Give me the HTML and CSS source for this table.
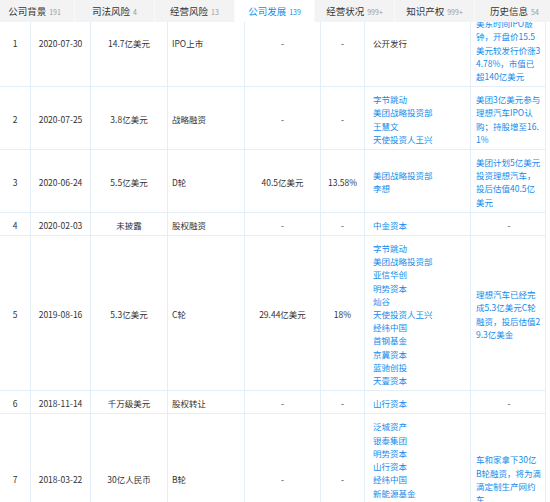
FILE: index.html
```html
<!DOCTYPE html>
<html lang="zh-CN">
<head>
<meta charset="utf-8">
<title>公司发展 - 融资历程</title>
<link rel="stylesheet" href="styles.css">
</head>
<body>
<div class="page">
  <nav class="tabs">
    <a class="tab">公司背景<span class="cnt">191</span></a>
    <a class="tab">司法风险<span class="cnt">4</span></a>
    <a class="tab">经营风险<span class="cnt">13</span></a>
    <a class="tab active">公司发展<span class="cnt">139</span></a>
    <a class="tab">经营状况<span class="cnt">999+</span></a>
    <a class="tab">知识产权<span class="cnt">999+</span></a>
    <a class="tab">历史信息<span class="cnt">54</span></a>
  </nav>
  <div class="scroll">
    <table class="grid">
      <colgroup>
        <col class="c1"><col class="c2"><col class="c3"><col class="c4">
        <col class="c5"><col class="c6"><col class="c7"><col class="c8">
      </colgroup>
      <tbody>
        <tr>
          <td class="ctr">1</td><td class="ctr">2020-07-30</td><td class="ctr">14.7亿美元</td><td class="round">IPO上市</td>
          <td class="ctr">-</td><td class="ctr">-</td>
          <td class="inv">公开发行</td>
          <td class="desc"><span class="news">理想汽车登陆纳斯达<br>美东时间IPO敲<br>钟，开盘价15.5<br>美元较发行价涨3<br>4.78%，市值已<br>超140亿美元</span></td>
        </tr>
        <tr>
          <td class="ctr">2</td><td class="ctr">2020-07-25</td><td class="ctr">3.8亿美元</td><td class="round">战略融资</td>
          <td class="ctr">-</td><td class="ctr">-</td>
          <td class="inv"><a>字节跳动</a><a>美团战略投资部</a><a>王慧文</a><a>天使投资人王兴</a></td>
          <td class="desc"><span class="news">美团3亿美元参与<br>理想汽车IPO认<br>购；持股增至16.<br>1%</span></td>
        </tr>
        <tr>
          <td class="ctr">3</td><td class="ctr">2020-06-24</td><td class="ctr">5.5亿美元</td><td class="round">D轮</td>
          <td class="ctr">40.5亿美元</td><td class="ctr">13.58%</td>
          <td class="inv"><a>美团战略投资部</a><a>李想</a></td>
          <td class="desc"><span class="news">美团计划5亿美元<br>投资理想汽车，<br>投后估值40.5亿<br>美元</span></td>
        </tr>
        <tr>
          <td class="ctr">4</td><td class="ctr">2020-02-03</td><td class="ctr">未披露</td><td class="round">股权融资</td>
          <td class="ctr">-</td><td class="ctr">-</td>
          <td class="inv"><a>中金资本</a></td>
          <td class="desc ctr">-</td>
        </tr>
        <tr>
          <td class="ctr">5</td><td class="ctr">2019-08-16</td><td class="ctr">5.3亿美元</td><td class="round">C轮</td>
          <td class="ctr">29.44亿美元</td><td class="ctr">18%</td>
          <td class="inv"><a>字节跳动</a><a>美团战略投资部</a><a>亚信华创</a><a>明势资本</a><a>灿谷</a><a>天使投资人王兴</a><a>经纬中国</a><a>首钢基金</a><a>京冀资本</a><a>蓝驰创投</a><a>天壹资本</a></td>
          <td class="desc"><span class="news">理想汽车已经完<br>成5.3亿美元C轮<br>融资，投后估值2<br>9.3亿美金</span></td>
        </tr>
        <tr>
          <td class="ctr">6</td><td class="ctr">2018-11-14</td><td class="ctr">千万级美元</td><td class="round">股权转让</td>
          <td class="ctr">-</td><td class="ctr">-</td>
          <td class="inv"><a>山行资本</a></td>
          <td class="desc ctr">-</td>
        </tr>
        <tr>
          <td class="ctr">7</td><td class="ctr">2018-03-22</td><td class="ctr">30亿人民币</td><td class="round">B轮</td>
          <td class="ctr">-</td><td class="ctr">-</td>
          <td class="inv"><a>泛城资产</a><a>银泰集团</a><a>明势资本</a><a>山行资本</a><a>经纬中国</a><a>新能源基金</a><a>源码资本</a><a>首钢基金</a><a>蓝驰创投</a></td>
          <td class="desc"><span class="news">车和家拿下30亿<br>B轮融资，将为滴<br>滴定制生产网约<br>车</span></td>
        </tr>
      </tbody>
    </table>
  </div>
</div>
</body>
</html>
```

FILE: styles.css
```css
html, body {
  margin: 0;
  padding: 0;
  background: #fff;
}
body {
  width: 550px;
  height: 502px;
  overflow: hidden;
  font-family: "Noto Sans CJK SC", "Noto Sans", sans-serif;
  color: #333;
}
.page {
  position: relative;
  width: 550px;
  height: 502px;
  overflow: hidden;
}
/* sticky tab bar floating over the scrolled table */
.tabs {
  position: absolute;
  top: 0;
  left: -5px;
  z-index: 2;
  display: flex;
  width: 560px;
  height: 22px;
  background: #f3f3f3;
}
.tab {
  width: 80px;
  flex: none;
  display: flex;
  align-items: center;
  justify-content: center;
  gap: 3px;
  font-size: 9.5px;
  line-height: 22px;
  color: #333;
  box-sizing: border-box;
  border-right: 1px solid #fafafa;
}
.tab .cnt {
  font-size: 7px;
  color: #999;
  padding-top: 1px;
}
.tab.active {
  background: #fff;
  color: #128bed;
}
.tab.active .cnt {
  color: #128bed;
}
.scroll {
  margin-top: -3px;
  margin-left: -1px;
}
.grid {
  border-collapse: collapse;
  table-layout: fixed;
  width: 546px;
}
.c1 { width: 31px; }
.c2 { width: 60px; }
.c3 { width: 77px; }
.c4 { width: 77px; }
.c5 { width: 76px; }
.c6 { width: 44px; }
.c7 { width: 106px; }
.c8 { width: 75px; }
.grid td {
  border: 1px solid #e4eef6;
  padding: 6px 4px 3px;
  font-size: 8.5px;
  line-height: 13.2px;
  vertical-align: middle;
  color: #333;
  white-space: nowrap;
  overflow: hidden;
}
.grid td.ctr {
  text-align: center;
}
.grid td.round {
  padding-left: 4px;
}
.grid td.inv {
  padding-left: 8px;
}
.grid td.inv a {
  display: block;
  color: #128bed;
  text-decoration: none;
}
.grid td.desc {
  padding-left: 5px;
  padding-right: 3px;
}
.news {
  color: #128bed;
}
```
